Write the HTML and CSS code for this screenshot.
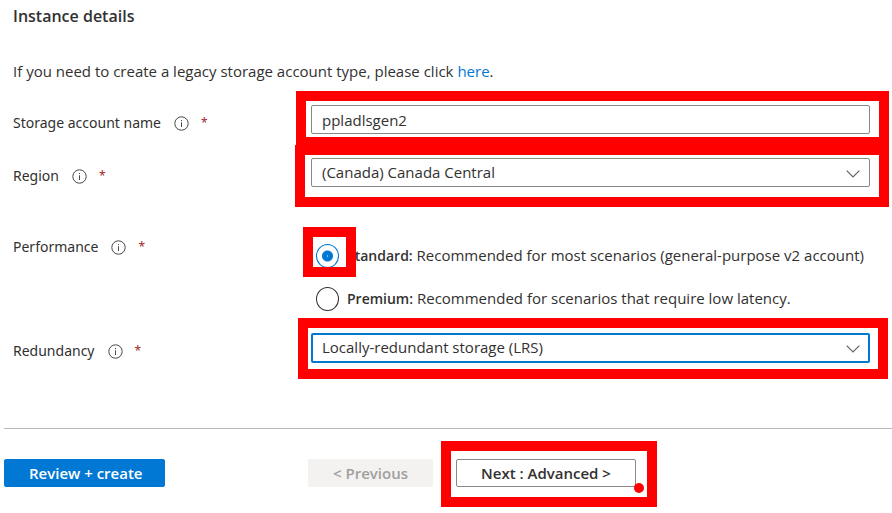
FILE: index.html
```html
<!DOCTYPE html>
<html lang="en">
<head>
<meta charset="utf-8">
<title>Create a storage account</title>
<meta name="viewport" content="width=device-width, initial-scale=1">
<link rel="stylesheet" href="styles.css">
</head>
<body>
<svg class="defs" aria-hidden="true">
  <symbol id="info" viewBox="0 0 15 15">
    <circle cx="7.5" cy="7.5" r="6.7" fill="none" stroke="currentColor" stroke-width="1"/>
    <path d="M7.5 6.3V11M7.5 4V5.1" stroke="currentColor" stroke-width="1" fill="none"/>
  </symbol>
  <symbol id="chevron" viewBox="0 0 14 8">
    <path d="M0.7 0.7L7 7L13.3 0.7" stroke="currentColor" stroke-width="1.1" fill="none"/>
  </symbol>
</svg>
<form class="page">
  <section class="details">
    <h1 class="title">Instance details</h1>
    <p class="intro">If you need to create a legacy storage account type, please click <a href="#">here</a>.</p>

    <div class="row">
      <div class="label"><label for="name">Storage account name</label><svg class="info"><use href="#info"/></svg><span class="required">*</span></div>
      <div class="control frame frame-name">
        <input class="field" id="name" type="text" value="ppladlsgen2">
      </div>
    </div>

    <div class="row">
      <div class="label"><label for="region">Region</label><svg class="info"><use href="#info"/></svg><span class="required">*</span></div>
      <div class="control frame frame-region">
        <select class="field" id="region"><option>(Canada) Canada Central</option></select>
        <svg class="chevron"><use href="#chevron"/></svg>
      </div>
    </div>

    <div class="row row-performance" role="radiogroup" aria-labelledby="performance">
      <div class="label"><span id="performance">Performance</span><svg class="info"><use href="#info"/></svg><span class="required">*</span></div>
      <div class="control choices">
        <div class="choice">
          <span class="frame frame-radio"><input class="radio" type="radio" name="performance" id="standard" checked></span>
          <label for="standard"><b>Standard:</b> Recommended for most scenarios (general-purpose v2 account)</label>
        </div>
        <div class="choice">
          <span class="plain"><input class="radio" type="radio" name="performance" id="premium"></span>
          <label for="premium"><b>Premium:</b> Recommended for scenarios that require low latency.</label>
        </div>
      </div>
    </div>

    <div class="row">
      <div class="label"><label for="redundancy">Redundancy</label><svg class="info"><use href="#info"/></svg><span class="required">*</span></div>
      <div class="control frame frame-redundancy">
        <select class="field field-active" id="redundancy"><option>Locally-redundant storage (LRS)</option></select>
        <svg class="chevron"><use href="#chevron"/></svg>
      </div>
    </div>
  </section>

  <footer class="actions">
    <button class="button primary" type="button">Review + create</button>
    <button class="button previous" type="button" disabled>&lt; Previous</button>
    <span class="frame frame-next"><button class="button next" type="button">Next : Advanced &gt;</button></span>
  </footer>
</form>
</body>
</html>
```
FILE: styles.css
```css
* { box-sizing: border-box; }

body {
  margin: 0;
  background: #fff;
  color: #323130;
  font: 15px/20px "Open Sans", "Noto Sans", sans-serif;
}

.defs { position: absolute; width: 0; height: 0; }

.page { padding-bottom: 26px; }

.details { padding: 6px 22px 65px 13px; }

.title {
  margin: 0;
  font-size: 16px;
  line-height: 20px;
  font-weight: 600;
}

.intro { margin: 35px 0 24px; }

a { color: #0078d4; text-decoration: none; }

.row { display: flex; margin-bottom: 24px; }
.row:last-child { margin-bottom: 0; }

.label {
  display: flex;
  align-items: center;
  flex: 0 0 298px;
  height: 20px;
  margin-top: 8px;
  font-family: "Noto Sans", "Open Sans", sans-serif;
  font-size: 14px;
}

.info { width: 15px; height: 15px; margin: 0 12px 0 13px; color: #494847; }
.required { color: #a4262c; font-size: 12px; }

.control { flex: 1; min-width: 0; }

.field {
  display: block;
  width: 100%;
  height: 29px;
  margin: 0;
  padding: 0 10px;
  border: 1px solid #8a8886;
  border-radius: 2px;
  background: #fff;
  color: #323130;
  font: inherit;
  appearance: none;
  outline: none;
}
select.field { padding-bottom: 2px; }
.field-active { height: 30px; border: 2px solid #0078d4; padding: 0 9px; }

.chevron {
  position: absolute;
  right: 10px;
  top: 12px;
  width: 14px;
  height: 8px;
  color: #605e5c;
}

.row-performance { margin: 42px 0 22px; }
.choices { display: flex; flex-direction: column; gap: 19px; padding: 15px 0 0 5px; }
.choice { display: flex; align-items: center; gap: 7px; height: 24px; white-space: nowrap; }
.choice label { padding-bottom: 1px; }
.choice b { font-size: 14px; font-weight: 600; }
.plain, .frame-radio { flex: none; width: 24px; height: 24px; }

.radio {
  display: block;
  width: 23px;
  height: 24px;
  margin: 0;
  border: 1px solid #323130;
  border-radius: 50%;
  background: #fff;
  appearance: none;
}
.radio:checked {
  border-color: #0078d4;
  background: radial-gradient(circle, #fff 0, #0078d4 1px 5px, #fff 6px);
}

/* Red highlight boxes drawn around the controls */
.frame { position: relative; }
.frame::after {
  content: "";
  position: absolute;
  border: 10px solid #f00;
  pointer-events: none;
}
.frame-name::after { inset: -14px -19px -13px -15px; }
.frame-region::after { inset: -13px -19px -20px -16px; }
.frame-radio::after { inset: -17px -16px -9px -13px; }
.frame-redundancy::after { inset: -15px -18px -16px -13px; }
.frame-next::after { inset: -18px -21px -20px -15px; }
.frame-next::before {
  content: "";
  position: absolute;
  right: -8px;
  bottom: -6px;
  width: 10px;
  height: 10px;
  border-radius: 50%;
  background: #f00;
}

.actions {
  display: flex;
  margin-left: 4px;
  padding-top: 30px;
  border-top: 1px solid #b8b8b8;
}

.button {
  display: block;
  height: 28px;
  padding: 0 24px;
  border: 1px solid #8a8886;
  border-radius: 2px;
  background: #fff;
  color: #323130;
  font: inherit;
  font-weight: 600;
  white-space: nowrap;
}
.primary { width: 161px; border-color: #0078d4; background: #0078d4; color: #fff; }
.previous { width: 125px; margin: 0 23px 0 143px; border-color: #f3f2f1; background: #f3f2f1; color: #a19f9d; }
.next { width: 180px; }
```
